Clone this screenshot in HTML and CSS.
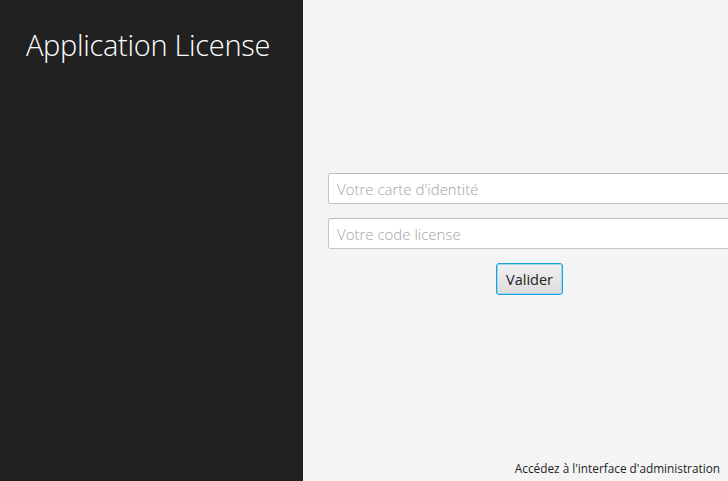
FILE: index.html
```html
<!DOCTYPE html>
<html lang="fr">
<head>
<meta charset="utf-8">
<title>Application License</title>
<link rel="stylesheet" href="styles.css">
</head>
<body>
<div class="app">
  <aside class="sidebar">
    <h1 class="title">Application License</h1>
  </aside>
  <main class="content">
    <form class="form">
      <input class="field" type="text" placeholder="Votre carte d'identité">
      <input class="field" type="text" placeholder="Votre code license">
      <div class="actions">
        <button class="btn" type="button">Valider</button>
      </div>
    </form>
    <div class="footer">
      <a class="admin-link" href="#">Accédez à l'interface d'administration</a>
    </div>
  </main>
</div>
</body>
</html>
```
FILE: styles.css
```css
html, body {
  margin: 0;
  padding: 0;
  height: 100%;
}
body {
  font-family: "Open Sans", "Noto Sans", sans-serif;
  overflow: hidden;
}
.app {
  display: flex;
  height: 481px;
  width: 728px;
}
.sidebar {
  width: 303px;
  flex: none;
  background: #212121;
  box-sizing: border-box;
  padding: 25px 0 0 26px;
}
.title {
  margin: 0;
  color: #ffffff;
  font-weight: 300;
  font-size: 29px;
  line-height: 40px;
  letter-spacing: -0.3px;
  white-space: nowrap;
}
.content {
  flex: 1;
  background: #f4f4f4;
  display: flex;
  flex-direction: column;
  overflow: hidden;
  padding-left: 25px;
  padding-top: 173px;
  box-sizing: border-box;
}
.form {
  display: flex;
  flex-direction: column;
  gap: 14px;
  width: 403px;
  flex: 1;
}
.field {
  box-sizing: border-box;
  width: 403px;
  height: 31px;
  margin: 0;
  border: 1px solid #c6c6c6;
  border-top-color: #b9b9b9;
  border-radius: 3px;
  background: #ffffff;
  padding: 0 8px;
  font-family: "Open Sans", "Noto Sans", sans-serif;
  font-size: 15px;
  color: #333;
  outline: none;
}
.field::placeholder {
  color: #a3a3a3;
  font-weight: 300;
}
.actions {
  display: flex;
  justify-content: center;
}
.btn {
  box-sizing: border-box;
  width: 67px;
  height: 32px;
  margin: 0;
  padding: 0;
  border: 1px solid #1aa3d9;
  border-radius: 3px;
  box-shadow: inset 0 0 0 1px #9fd6ee;
  background: linear-gradient(#f0f0f0, #dcdcdc);
  font-family: "Open Sans", "Noto Sans", sans-serif;
  font-size: 14.5px;
  color: #222;
  cursor: pointer;
}
.footer {
  display: flex;
  justify-content: flex-end;
  padding: 0 8px 5px 0;
}
.admin-link {
  font-size: 11.8px;
  color: #1e1e1e;
  text-decoration: none;
  line-height: 16px;
}
```
